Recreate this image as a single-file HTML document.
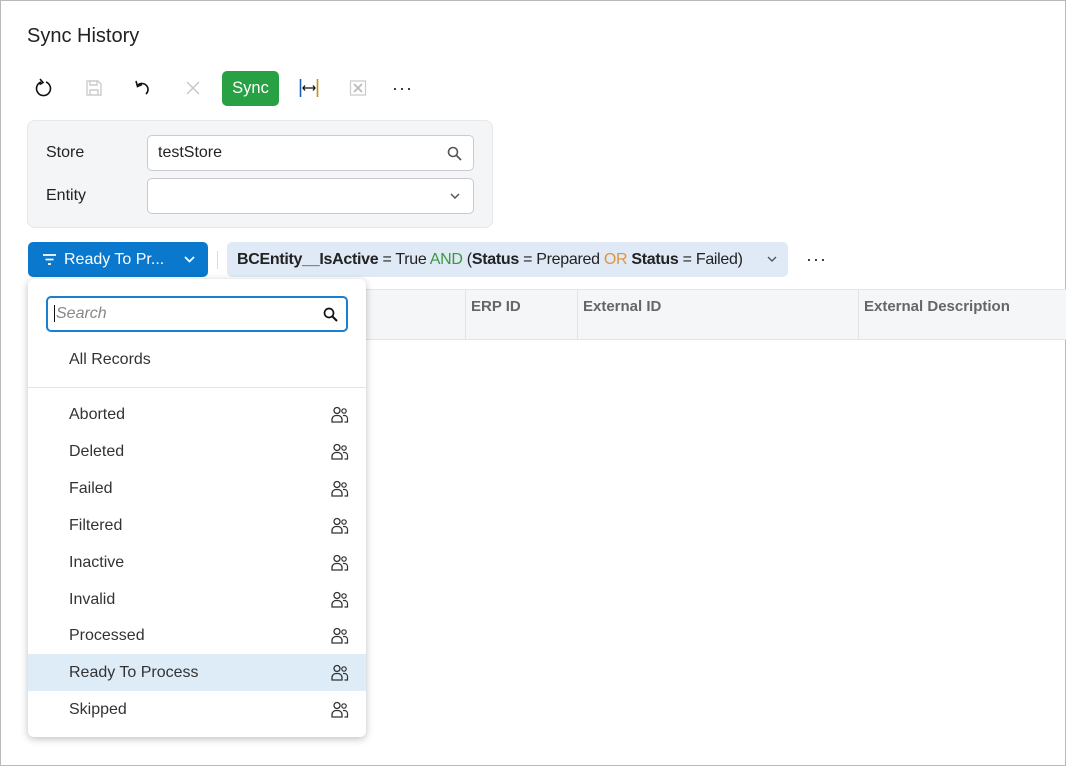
<!DOCTYPE html>
<html><head><meta charset="utf-8"><style>
*{box-sizing:border-box;margin:0;padding:0}
body{width:1066px;height:766px;overflow:hidden;font-family:"Liberation Sans",sans-serif;color:#222;background:#fff}
.frame{position:absolute;left:0;top:0;width:1066px;height:766px;border:1px solid #b9b9b9}
.abs{position:absolute}
.title{left:27px;top:25px;font-size:20px;color:#222}
.icon{position:absolute;top:78px}
.sync{left:222px;top:71px;width:57px;height:35px;background:#28a044;border-radius:5px;color:#fff;font-size:16.5px;line-height:35px;text-align:center}
.panel{left:27px;top:120px;width:466px;height:108px;background:#f4f5f7;border:1px solid #e6e7ea;border-radius:8px}
.lbl{font-size:16px;color:#222}
.inp{position:absolute;left:147px;width:327px;height:36px;background:#fff;border:1px solid #c9cbd0;border-radius:5px;font-size:16px;line-height:34px;padding-left:10px}
.btn{left:28px;top:242px;width:180px;height:35px;background:#0a78cc;border-radius:5px;color:#fff;font-size:16px;line-height:35px}
.cond{left:227px;top:242px;width:561px;height:35px;background:#dfeaf6;border-radius:5px;font-size:16px;line-height:35px;padding-left:10px;white-space:nowrap;letter-spacing:-0.3px}
.th{top:289px;left:366px;width:700px;height:51px;background:#f5f6f8;border-top:1px solid #e3e4e7;border-bottom:1px solid #e3e4e7}
.th div{position:absolute;top:0;height:50px;border-left:1px solid #e3e4e7;font-size:15px;font-weight:bold;color:#666;padding:8px 0 0 5px}
.dd{left:28px;top:279px;width:338px;height:458px;background:#fff;border-radius:6px;box-shadow:0 2px 8px rgba(0,0,0,.25)}
.srch{position:absolute;left:18px;top:17px;width:302px;height:36px;border:2px solid #1a7fd1;border-radius:5px;font-size:16px;font-style:italic;color:#888;line-height:32px;padding-left:6px}
.item{position:absolute;left:0;width:338px;height:37px;font-size:16px;line-height:37px;padding-left:41px;color:#333}
.item svg{position:absolute;right:17px;top:10px}
.sel{background:#deecf8}
</style></head><body>
<div class="frame"></div>
<div class="abs title">Sync History</div>
<svg class="icon" style="left:35px" width="18" height="20" viewBox="0 0 18 20"><path d="M6 4 A7 7 0 1 0 11 4" fill="none" stroke="#111" stroke-width="1.6"/><path d="M5 1 L8 4.5 L4.5 6.5" fill="none" stroke="#111" stroke-width="1.6"/></svg>
<svg class="icon" style="left:85px" width="18" height="20" viewBox="0 0 18 20"><path d="M2 3h11l3 3v11H2z M5 3v4h7V3 M5 17v-5h8v5" fill="none" stroke="#ccc" stroke-width="1.4"/></svg>
<svg class="icon" style="left:134px" width="20" height="20" viewBox="0 0 20 20"><path d="M4 7 A6 6 0 1 1 12 16" fill="none" stroke="#111" stroke-width="1.6"/><path d="M2 3 L3.5 8.5 L8 6.5" fill="none" stroke="#111" stroke-width="1.6"/></svg>
<svg class="icon" style="left:184px" width="18" height="20" viewBox="0 0 18 20"><path d="M3 4l12 12M15 4L3 16" stroke="#c8c8c8" stroke-width="1.5"/></svg>
<div class="abs sync">Sync</div>
<svg class="icon" style="left:299px" width="20" height="20" viewBox="0 0 20 20"><path d="M1.5 1v18" stroke="#1c5fb0" stroke-width="1.6"/><path d="M18.5 1v18" stroke="#d08a10" stroke-width="1.6"/><path d="M4 10h12M6 7.5L4 10l2 2.5M14 7.5l2 2.5-2 2.5" fill="none" stroke="#111" stroke-width="1.3"/></svg>
<svg class="icon" style="left:349px" width="18" height="20" viewBox="0 0 18 20"><rect x="1.5" y="3" width="15" height="14" fill="none" stroke="#ccc" stroke-width="1.3"/><path d="M5 6l8 8M13 6l-8 8" stroke="#bbb" stroke-width="1.8"/></svg>
<div class="abs" style="left:392px;top:78px;font-size:18px;letter-spacing:1px;color:#222">···</div>
<div class="abs panel"></div>
<div class="abs lbl" style="left:46px;top:144px">Store</div>
<div class="abs lbl" style="left:46px;top:187px">Entity</div>
<div class="inp" style="top:135px">testStore<svg style="position:absolute;right:11px;top:10px" width="15" height="15" viewBox="0 0 15 15"><circle cx="6" cy="6" r="4.5" fill="none" stroke="#555" stroke-width="1.6"/><path d="M9.5 9.5L14 14" stroke="#555" stroke-width="1.8"/></svg></div>
<div class="inp" style="top:178px"><svg style="position:absolute;right:13px;top:14px" width="10" height="7" viewBox="0 0 10 7"><path d="M1 1l4 4 4-4" fill="none" stroke="#555" stroke-width="1.5"/></svg></div>
<div class="abs btn"><svg style="position:absolute;left:14px;top:11px" width="15" height="13" viewBox="0 0 15 13"><path d="M1 2h13M3.5 6.5h8M6 11h3" stroke="#fff" stroke-width="1.8"/></svg><span style="position:absolute;left:36px">Ready To Pr...</span><svg style="position:absolute;left:156px;top:14px" width="11" height="7" viewBox="0 0 11 7"><path d="M1 1l4.5 4.5L10 1" fill="none" stroke="#fff" stroke-width="1.8"/></svg></div>
<div class="abs" style="left:217px;top:251px;width:1px;height:18px;background:#ddd"></div>
<div class="abs cond"><b>BCEntity__IsActive</b> = True <span style="color:#3a9a3a">AND</span> (<b>Status</b> = Prepared <span style="color:#e0953a">OR</span> <b>Status</b> = Failed)<svg style="position:absolute;right:11px;top:14px" width="10" height="7" viewBox="0 0 10 7"><path d="M1 1l4 4 4-4" fill="none" stroke="#555" stroke-width="1.4"/></svg></div>
<div class="abs" style="left:806px;top:249px;font-size:18px;letter-spacing:1px">···</div>
<div class="abs th"><div style="left:99px;width:112px">ERP ID</div><div style="left:211px;width:281px">External ID</div><div style="left:492px;width:208px">External Description</div></div>
<div class="abs dd">
<div class="srch"><span style="border-left:1px solid #111;padding-left:1px">Search</span><svg style="position:absolute;right:8px;top:9px" width="15" height="15" viewBox="0 0 15 15"><circle cx="6" cy="6" r="4.5" fill="none" stroke="#111" stroke-width="1.7"/><path d="M9.5 9.5L14 14" stroke="#111" stroke-width="2"/></svg></div>
<div class="item" style="top:62px">All Records</div>
<div style="position:absolute;left:0;top:108px;width:338px;height:1px;background:#e3e4e7"></div>
<div id="items"></div>
</div>
<script>
var n=["Aborted","Deleted","Failed","Filtered","Inactive","Invalid","Processed","Ready To Process","Skipped"],h="";
var ic='<svg width="18" height="17" viewBox="0 0 18 17"><circle cx="6" cy="4.5" r="3" fill="none" stroke="#333" stroke-width="1.3"/><path d="M1 16v-2.5a4 4 0 0 1 4-4h2a4 4 0 0 1 4 4V16z" fill="none" stroke="#333" stroke-width="1.3"/><circle cx="13" cy="5" r="2.2" fill="none" stroke="#333" stroke-width="1.2"/><path d="M12 9.5h1.5a3 3 0 0 1 3 3V16h-3" fill="none" stroke="#333" stroke-width="1.2"/></svg>';
for(var i=0;i<n.length;i++){h+='<div class="item'+(i==7?' sel':'')+'" style="top:'+(117+i*36.9)+'px">'+n[i]+ic+'</div>';}
document.getElementById("items").innerHTML=h;
</script>
</body></html>
